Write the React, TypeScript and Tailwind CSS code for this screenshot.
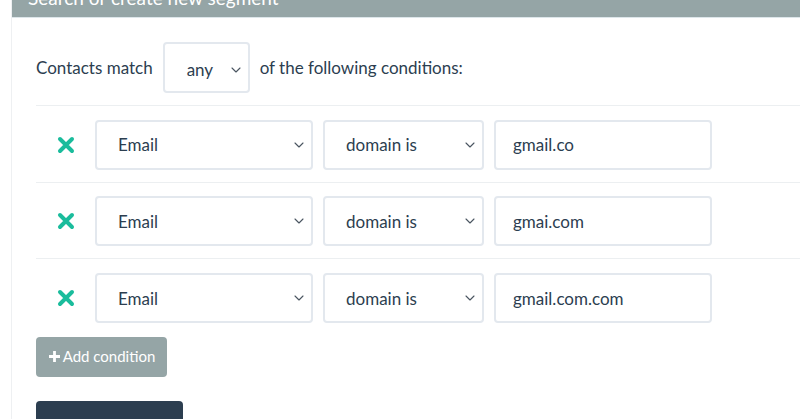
import React from "react";

function Chevron() {
  return (
    <svg width="10" height="6" viewBox="0 0 10 6" fill="none" className="shrink-0">
      <path d="M1 1 L5 5 L9 1" stroke="#4a5560" strokeWidth="1.1" strokeLinecap="round" strokeLinejoin="round" />
    </svg>
  );
}

function XIcon() {
  return (
    <svg width="18" height="18" viewBox="0 0 18 18">
      <path d="M3 3 L15 15 M15 3 L3 15" stroke="#1abc9c" strokeWidth="4" strokeLinecap="round" />
    </svg>
  );
}

function Row({ value, last }: { value: string; last?: boolean }) {
  return (
    <div className={"flex items-center h-[76.5px] pt-[2px] " + (last ? "" : "border-b border-[#eceff1]")}>
      <div className="w-[59px] flex justify-center">
        <XIcon />
      </div>
      <div className="w-[218px] h-[50px] border-2 border-[#e3e8ee] rounded-[4px] flex items-center justify-between pl-[21px] pr-[7px]">
        <span>Email</span>
        <Chevron />
      </div>
      <div className="ml-[10px] w-[161px] h-[50px] border-2 border-[#e3e8ee] rounded-[4px] flex items-center justify-between pl-[21px] pr-[7px]">
        <span>domain is</span>
        <Chevron />
      </div>
      <div className="ml-[10px] w-[218px] h-[50px] border-2 border-[#e3e8ee] rounded-[4px] flex items-center pl-[17px]">
        <span>{value}</span>
      </div>
    </div>
  );
}

export default function App() {
  return (
    <div className="w-[800px] h-[419px] overflow-hidden bg-white text-[#2c3e50] text-[17px] font-['Lato','Liberation_Sans',sans-serif]">
      <div className="ml-[11px] h-full border-l border-[#eef0f2]">
        <div className="h-[18px] bg-[#95a5a6] border-b border-[#dde6ea] overflow-hidden relative">
          <div className="absolute left-[16px] top-[-14px] text-white text-[19px] leading-[24px]">Search or create new segment</div>
        </div>
        <div className="pl-[24px]">
          <div className="flex items-center h-[88px] border-b border-[#eceff1] pt-[12px]">
            <span>Contacts match</span>
            <div className="ml-[10px] w-[87px] h-[51px] border-2 border-[#e3e8ee] rounded-[4px] flex items-center justify-between pl-[22px] pr-[7px] pt-[4px]">
              <span>any</span>
              <Chevron />
            </div>
            <span className="ml-[10px]">of the following conditions:</span>
          </div>
          <Row value="gmail.co" />
          <Row value="gmai.com" />
          <Row value="gmail.com.com" last />
          <div className="mt-[1px]">
            <button className="h-[40px] w-[131px] bg-[#95a5a6] text-white rounded-[4px] flex items-center justify-center text-[15px]">
              <svg width="13" height="13" viewBox="0 0 13 13" className="mr-[2px]">
                <path d="M6.5 1 V12 M1 6.5 H12" stroke="white" strokeWidth="2.8" />
              </svg>
              Add condition
            </button>
          </div>
          <div className="mt-[24px]">
            <div className="h-[40px] w-[147px] bg-[#2c3e50] rounded-[4px]"></div>
          </div>
        </div>
      </div>
    </div>
  );
}
